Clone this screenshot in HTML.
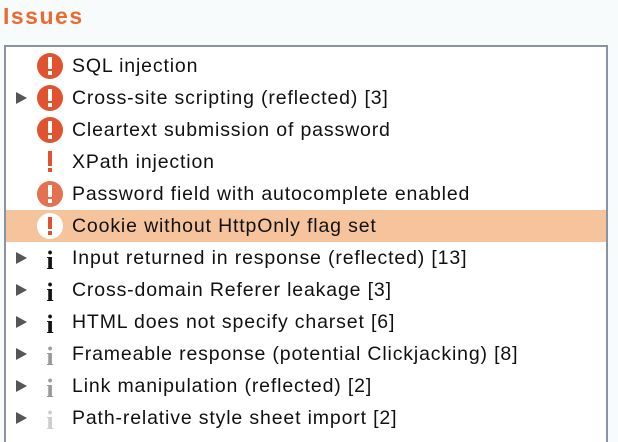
<!DOCTYPE html>
<html style="overflow:hidden;height:442px"><head><style>
body{margin:0;width:618px;height:442px;overflow:hidden;background:#f7fbfb;font-family:"Liberation Sans",sans-serif;position:relative}
.t{position:absolute;left:3px;top:3px;font-size:23px;font-weight:bold;color:#ea6a30;letter-spacing:1.5px}
.box{position:absolute;left:4px;top:45px;width:600px;height:400px;border:2px solid #8a94a0;background:#fff}
.r{position:absolute;left:0;width:600px;height:32px}
.r.h{background:#f6c49c}
.txt{position:absolute;left:66px;top:5px;font-size:19.5px;letter-spacing:0.85px;color:#111;white-space:nowrap}
.arr{position:absolute;left:10px;top:10px;width:0;height:0;border-top:6px solid transparent;border-bottom:6px solid transparent;border-left:11px solid #555}
svg{position:absolute;left:30px;top:2px}
</style></head><body>
<div class="t">Issues</div>
<div class="box">
<div class="r" style="top:3px"><svg width="28" height="28"><circle cx="14" cy="14" r="13" fill="#e0532e"/><rect x="12" y="5" width="4" height="12" fill="#fff"/><rect x="12" y="19" width="4" height="4" fill="#fff"/></svg><div class="txt">SQL injection</div></div>
<div class="r" style="top:35px"><div class="arr"></div><svg width="28" height="28"><circle cx="14" cy="14" r="13" fill="#e0532e"/><rect x="12" y="5" width="4" height="12" fill="#fff"/><rect x="12" y="19" width="4" height="4" fill="#fff"/></svg><div class="txt">Cross-site scripting (reflected) [3]</div></div>
<div class="r" style="top:67px"><svg width="28" height="28"><circle cx="14" cy="14" r="13" fill="#e0532e"/><rect x="12" y="5" width="4" height="12" fill="#fff"/><rect x="12" y="19" width="4" height="4" fill="#fff"/></svg><div class="txt">Cleartext submission of password</div></div>
<div class="r" style="top:99px"><svg width="28" height="28"><rect x="12" y="3" width="4" height="15" fill="#e0532e"/><rect x="12" y="20" width="4" height="4" fill="#e0532e"/></svg><div class="txt">XPath injection</div></div>
<div class="r" style="top:131px"><svg width="28" height="28"><circle cx="14" cy="14" r="13" fill="#e57150"/><rect x="12" y="5" width="4" height="12" fill="#fff"/><rect x="12" y="19" width="4" height="4" fill="#fff"/></svg><div class="txt">Password field with autocomplete enabled</div></div>
<div class="r h" style="top:163px"><svg width="28" height="28"><circle cx="14" cy="14" r="13" fill="#fff"/><rect x="12" y="5" width="4" height="12" fill="#e0532e"/><rect x="12" y="19" width="4" height="4" fill="#e0532e"/></svg><div class="txt">Cookie without HttpOnly flag set</div></div>
<div class="r" style="top:195px"><div class="arr"></div><svg width="28" height="28"><text x="14" y="25" text-anchor="middle" font-family="Liberation Serif" font-weight="bold" font-size="26" fill="#111">i</text></svg><div class="txt">Input returned in response (reflected) [13]</div></div>
<div class="r" style="top:227px"><div class="arr"></div><svg width="28" height="28"><text x="14" y="25" text-anchor="middle" font-family="Liberation Serif" font-weight="bold" font-size="26" fill="#111">i</text></svg><div class="txt">Cross-domain Referer leakage [3]</div></div>
<div class="r" style="top:259px"><div class="arr"></div><svg width="28" height="28"><text x="14" y="25" text-anchor="middle" font-family="Liberation Serif" font-weight="bold" font-size="26" fill="#111">i</text></svg><div class="txt">HTML does not specify charset [6]</div></div>
<div class="r" style="top:291px"><div class="arr"></div><svg width="28" height="28"><text x="14" y="25" text-anchor="middle" font-family="Liberation Serif" font-weight="bold" font-size="26" fill="#999">i</text></svg><div class="txt">Frameable response (potential Clickjacking) [8]</div></div>
<div class="r" style="top:323px"><div class="arr"></div><svg width="28" height="28"><text x="14" y="25" text-anchor="middle" font-family="Liberation Serif" font-weight="bold" font-size="26" fill="#999">i</text></svg><div class="txt">Link manipulation (reflected) [2]</div></div>
<div class="r" style="top:355px"><div class="arr"></div><svg width="28" height="28"><text x="14" y="25" text-anchor="middle" font-family="Liberation Serif" font-weight="bold" font-size="26" fill="#ccc">i</text></svg><div class="txt">Path-relative style sheet import [2]</div></div>
</div>
</body></html>
